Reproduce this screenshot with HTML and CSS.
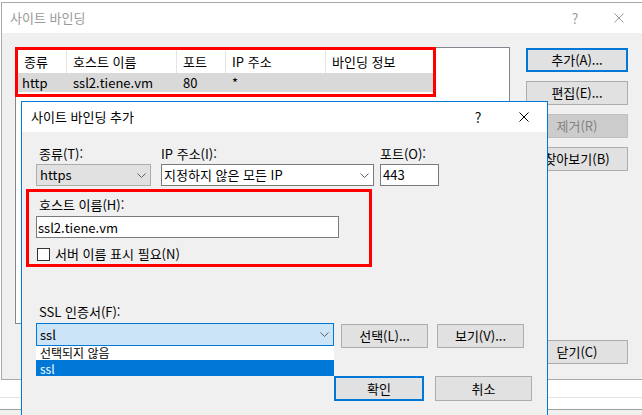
FILE: index.html
```html
<!DOCTYPE html>
<html lang="ko">
<head>
    <meta charset="UTF-8">
    <meta name="viewport" content="width=device-width, initial-scale=1.0">
    <title>사이트 바인딩</title>
    <link rel="stylesheet" href="styles.css">
</head>
<body>
    <div class="desk">
        <!-- ventana de fondo -->
        <div class="backwin">
            <div class="backwin-row"></div>
            <div class="backwin-row2"></div>
        </div>

        <!-- 사이트 바인딩 -->
        <div class="win win-outer">
            <div class="titlebar">
                <span class="title">사이트 바인딩</span>
                <span class="tb-help">?</span>
                <span class="tb-close">
                    <svg width="10" height="10" viewBox="0 0 10 10"><path d="M0.5 0.5L9.5 9.5M9.5 0.5L0.5 9.5" stroke="currentColor" stroke-width="1" fill="none"/></svg>
                </span>
            </div>
            <div class="outer-body">
                <div class="listbox">
                    <div class="lv-row lv-head">
                        <span class="c1 first">종류</span>
                        <span class="c2">호스트 이름</span>
                        <span class="c3">포트</span>
                        <span class="c4">IP 주소</span>
                        <span class="c5">바인딩 정보</span>
                    </div>
                    <div class="lv-row lv-sel">
                        <span class="c1">http</span>
                        <span class="c2">ssl2.tiene.vm</span>
                        <span class="c3">80</span>
                        <span class="c4">*</span>
                        <span class="c5"></span>
                    </div>
                    <div class="mark mark-list"></div>
                </div>
                <div class="side-btns">
                    <button class="btn btn-default">추가(A)...</button>
                    <button class="btn">편집(E)...</button>
                    <button class="btn btn-disabled">제거(R)</button>
                    <button class="btn">찾아보기(B)</button>
                    <button class="btn btn-close">닫기(C)</button>
                </div>
            </div>
        </div>

        <!-- 사이트 바인딩 추가 -->
        <div class="win win-inner">
            <div class="titlebar">
                <span class="title">사이트 바인딩 추가</span>
                <span class="tb-help">?</span>
                <span class="tb-close">
                    <svg width="10" height="10" viewBox="0 0 10 10"><path d="M0.5 0.5L9.5 9.5M9.5 0.5L0.5 9.5" stroke="currentColor" stroke-width="1" fill="none"/></svg>
                </span>
            </div>
            <div class="inner-body">
                <div class="field-row">
                    <div class="field f-type">
                        <label>종류(T):</label>
                        <div class="combo combo-plain">
                            <span class="combo-text">https</span>
                            <span class="chev"><svg width="9" height="5" viewBox="0 0 9 5"><polyline points="0.5,0.5 4.5,4.5 8.5,0.5" stroke="#606060" fill="none"/></svg></span>
                        </div>
                    </div>
                    <div class="field f-ip">
                        <label>IP 주소(I):</label>
                        <div class="combo">
                            <span class="combo-text">지정하지 않은 모든 IP</span>
                            <span class="chev"><svg width="9" height="5" viewBox="0 0 9 5"><polyline points="0.5,0.5 4.5,4.5 8.5,0.5" stroke="#606060" fill="none"/></svg></span>
                        </div>
                    </div>
                    <div class="field f-port">
                        <label>포트(O):</label>
                        <div class="combo">
                            <span class="combo-text">443</span>
                        </div>
                    </div>
                </div>

                <div class="mark host-group">
                    <label>호스트 이름(H):</label>
                    <div class="host-input">ssl2.tiene.vm</div>
                    <div class="check-row">
                        <span class="checkbox"></span>
                        <span>서버 이름 표시 필요(N)</span>
                    </div>
                </div>

                <div class="ssl-label">SSL 인증서(F):</div>
                <div class="ssl-row">
                    <div class="combo combo-focus">
                        <span class="combo-text">ssl</span>
                        <span class="chev"><svg width="9" height="5" viewBox="0 0 9 5"><polyline points="0.5,0.5 4.5,4.5 8.5,0.5" stroke="#606060" fill="none"/></svg></span>
                        <div class="dropdown">
                            <div class="dd-item"><span>선택되지 않음</span></div>
                            <div class="dd-item sel"><span>ssl</span></div>
                        </div>
                    </div>
                    <button class="btn btn-pick">선택(L)...</button>
                    <button class="btn btn-view">보기(V)...</button>
                </div>

                <div class="dlg-btns">
                    <button class="btn btn-default btn-ok">확인</button>
                    <button class="btn btn-cancel">취소</button>
                </div>
            </div>
        </div>
    </div>
</body>
</html>
```

FILE: styles.css
```css
body {
    margin: 0;
    font-family: "Noto Sans CJK KR", sans-serif;
    font-size: 13px;
    color: #000;
    background: #fff;
    overflow: hidden;
}
.desk {
    position: relative;
    width: 642px;
    height: 415px;
    overflow: hidden;
}
.backwin {
    position: absolute;
    left: 0;
    right: 0;
    top: 380px;
    bottom: 0;
    background: #f0f0f0;
}
.backwin-row {
    height: 17px;
    background: #fff;
    border-bottom: 1px solid #e3e3e3;
}
.backwin-row2 {
    height: 11px;
    background: #fff;
    border-bottom: 1px solid #a0a0a0;
}
.win {
    position: absolute;
    box-sizing: border-box;
    background: #f0f0f0;
    display: flex;
    flex-direction: column;
}
.win-outer {
    left: 1px;
    top: 2px;
    width: 641px;
    height: 378px;
    border: 1px solid #aaa;
    border-right: none;
}
.win-inner {
    left: 21px;
    top: 101px;
    width: 527px;
    height: 340px;
    border: 1px solid #0078d7;
}
.titlebar {
    height: 30px;
    flex: none;
    background: #fff;
    display: flex;
    align-items: center;
    line-height: 16px;
}
.win-outer .titlebar {
    padding: 0 13px 0 8px;
    color: #999;
}
.win-inner .titlebar {
    padding: 0 13px 0 9px;
}
.title {
    flex: 1;
}
.tb-help {
    width: 20px;
    text-align: center;
    font-size: 14px;
}
.win-outer .tb-help {
    margin-right: 24px;
}
.win-inner .tb-help {
    margin-right: 26px;
}
.tb-close {
    width: 20px;
    display: flex;
    justify-content: center;
}
.outer-body {
    flex: 1;
    display: flex;
    gap: 16px;
    padding: 14px 0 15px 13px;
}
.listbox {
    position: relative;
    width: 495px;
    height: 277px;
    box-sizing: border-box;
    border: 1px solid #828790;
    background: #fff;
}
.lv-row {
    display: flex;
    width: 418px;
    line-height: 16px;
}
.lv-row span {
    box-sizing: border-box;
    padding-left: 6px;
    white-space: nowrap;
}
.lv-head {
    height: 25px;
    padding-top: 2px;
    box-sizing: border-box;
}
.lv-head span {
    display: flex;
    align-items: center;
    border-right: 1px solid #e5e5e5;
}
.lv-head .first {
    padding-left: 8px;
}
.lv-sel {
    height: 19px;
    align-items: center;
    background: #d9d9d9;
}
.c1 { width: 51px; }
.c2 { width: 110px; }
.c3 { width: 49px; }
.c4 { width: 100px; }
.c5 { width: 108px; }
.mark {
    border: 3px solid #f00;
    box-sizing: border-box;
}
.mark-list {
    position: absolute;
    left: -1px;
    top: -1px;
    width: 421px;
    height: 50px;
}
.side-btns {
    width: 102px;
    display: flex;
    flex-direction: column;
    gap: 9px;
    padding-top: 1px;
}
.btn {
    font: inherit;
    line-height: 16px;
    height: 24px;
    box-sizing: border-box;
    border: 1px solid #adadad;
    background: #e1e1e1;
    color: #000;
    padding: 0;
    white-space: nowrap;
}
.btn-default {
    border: 2px solid #0078d7;
}
.btn-disabled {
    background: #ccc;
    border-color: #bfbfbf;
    color: #838383;
}
.btn-close {
    margin-top: auto;
}
.inner-body {
    flex: 1;
    padding: 14px 15px 0 14px;
}
.field-row {
    display: flex;
}
label {
    display: block;
    line-height: 16px;
}
.f-type {
    width: 115px;
    margin-right: 10px;
}
.f-type label {
    padding-left: 3px;
}
.f-ip {
    width: 213px;
    margin-right: 6px;
}
.f-port {
    width: 59px;
}
.combo {
    margin-top: 2px;
    height: 22px;
    box-sizing: border-box;
    border: 1px solid #7a7a7a;
    background: #fff;
    display: flex;
    align-items: center;
    line-height: 16px;
}
.combo-text {
    flex: 1;
    padding-left: 2px;
    white-space: nowrap;
}
.combo-plain {
    background: #e1e1e1;
    border-color: #adadad;
}
.combo-plain .combo-text,
.combo-focus .combo-text {
    padding-left: 3px;
}
.chev {
    width: 17px;
    display: flex;
    justify-content: center;
}
.host-group {
    margin: 3px 0 0 -10px;
    width: 346px;
    padding: 5px 0 2px 7px;
}
.host-group label {
    padding-left: 3px;
}
.host-input {
    margin-top: 3px;
    width: 303px;
    height: 22px;
    box-sizing: border-box;
    border: 1px solid #7a7a7a;
    background: #fff;
    padding-left: 1px;
    display: flex;
    align-items: center;
}
.check-row {
    margin-top: 8px;
    display: flex;
    align-items: center;
    gap: 5px;
    line-height: 16px;
    padding-left: 1px;
}
.checkbox {
    width: 13px;
    height: 13px;
    box-sizing: border-box;
    border: 1px solid #333;
    background: #fff;
}
.ssl-label {
    margin-top: 37px;
    line-height: 16px;
    padding-left: 3px;
}
.ssl-row {
    display: flex;
    align-items: flex-start;
    margin-top: 3px;
}
.combo-focus {
    position: relative;
    margin-top: 0;
    width: 298px;
    height: 23px;
    background: #cce4f7;
    border-color: #0078d7;
}
.ssl-row .btn {
    width: 87px;
    margin-top: 1px;
}
.btn-pick {
    margin-left: 7px;
}
.btn-view {
    margin-left: 9px;
}
.dropdown {
    position: absolute;
    left: -1px;
    top: 22px;
    width: 298px;
    background: #fff;
    z-index: 1;
}
.dd-item {
    height: 16px;
    padding-left: 4px;
}
.dd-item span {
    display: block;
    font-size: 12px;
    line-height: 18px;
    white-space: nowrap;
}
.dd-item:first-child span {
    margin-top: -2px;
}
.dd-item.sel {
    background: #0078d7;
    color: #fff;
}
.dlg-btns {
    display: flex;
    justify-content: flex-end;
    gap: 11px;
    margin-top: 28px;
}
.dlg-btns .btn {
    height: 25px;
}
.btn-ok {
    width: 90px;
}
.btn-cancel {
    width: 97px;
}
```
